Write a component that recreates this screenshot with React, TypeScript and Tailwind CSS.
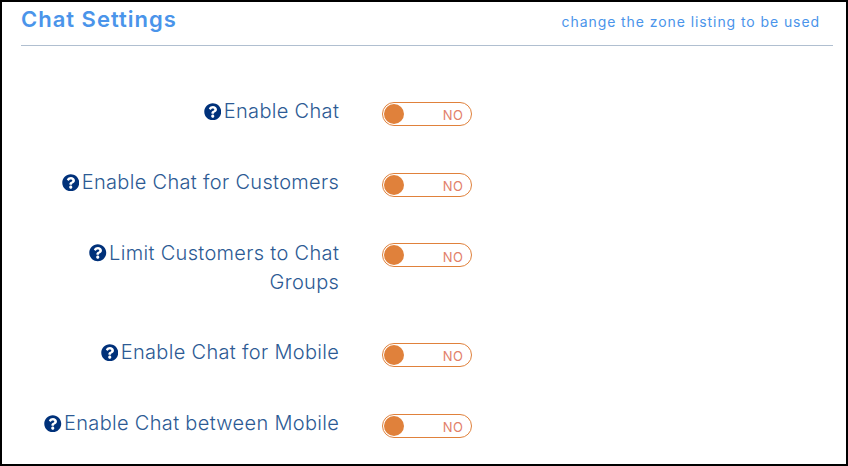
import { FaQuestionCircle } from 'react-icons/fa';

interface SettingRowProps {
    label: string;
}

const settings: string[] = [
    'Enable Chat',
    'Enable Chat for Customers',
    'Limit Customers to Chat Groups',
    'Enable Chat for Mobile',
    'Enable Chat between Mobile',
];

function Toggle() {
    return (
        <button
            type="button"
            role="switch"
            aria-checked={false}
            className="mt-[4.5px] flex h-6 w-[90px] items-center justify-between rounded-full border border-[#e0813b] bg-white pr-[7.5px] pl-px"
        >
            <span className="size-5 rounded-full bg-[#e0813b]" />
            <span className="pt-[2.5px] text-[13px] leading-5 tracking-[0.5px] text-[#e2806a]">NO</span>
        </button>
    );
}

function SettingRow({ label }: SettingRowProps) {
    return (
        <div className="flex items-start gap-[42.8px]">
            <label className="w-[318.2px] pl-3 text-right text-[20px] leading-[29px] font-light tracking-[0.32px] text-[#2c5a94]">
                <FaQuestionCircle className="mr-[2.5px] inline size-[17.5px] align-[-2px] text-[#00317a]" />
                {label}
            </label>
            <Toggle />
        </div>
    );
}

export default function App() {
    return (
        <div className="h-[466px] w-[848px] overflow-hidden border-2 border-black bg-white pl-[19px] font-['Inter',sans-serif]">
            {/* Section header */}
            <div className="flex h-11 w-[812px] items-start justify-between border-b border-[#b0bfd0] pr-[13px]">
                <h2 className="pt-[3px] text-[22px] leading-7 font-semibold tracking-[1px] text-[#4a94ea]">Chat Settings</h2>
                <a href="#" className="pt-2.5 text-[14px] leading-5 tracking-[0.92px] text-[#4a94ea]">
                    change the zone listing to be used
                </a>
            </div>

            {/* Settings */}
            <div className="flex flex-col gap-[41.7px] pt-[51.4px]">
                {settings.map((label) => (
                    <SettingRow key={label} label={label} />
                ))}
            </div>
        </div>
    );
}
